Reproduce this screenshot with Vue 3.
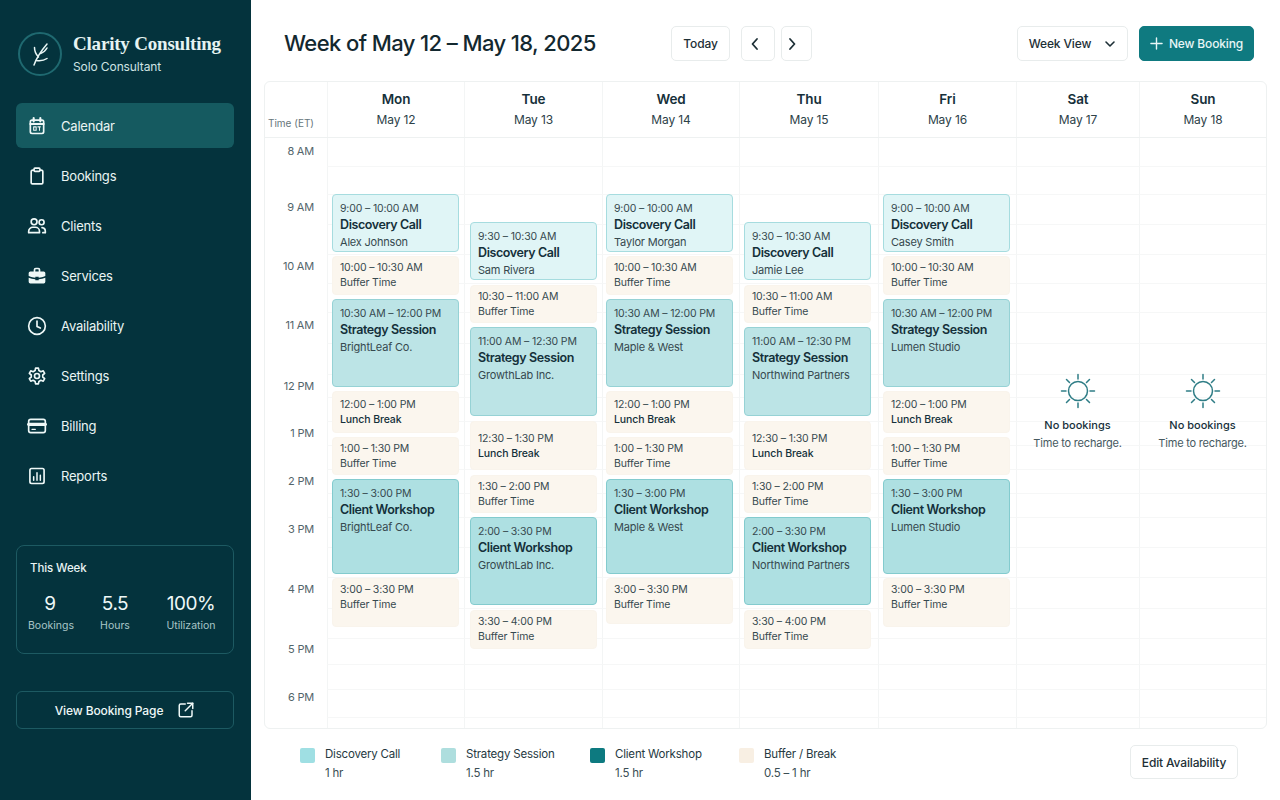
<template>
  <div class="app">
    <aside class="sidebar">
      <div class="brand">
        <div class="logo">
          <svg width="26" height="26" viewBox="0 0 26 26" fill="none" stroke="#e9f6f5" stroke-width="1.5" stroke-linecap="round" stroke-linejoin="round">
            <path d="M7 24C9.5 17 14 10 20 3" />
            <path d="M11.5 16C9 13.5 7.5 10.5 7.5 6.5" />
            <path d="M13.5 12.5C16 11.5 18.5 10 20 7" />
            <path d="M9.5 19.5C13 20 17 19.5 20 17.5" />
          </svg>
        </div>
        <div>
          <div class="brand-name">Clarity Consulting</div>
          <div class="brand-sub">Solo Consultant</div>
        </div>
      </div>

      <nav class="nav">
        <a v-for="item in navItems" :key="item.label" class="nav-item" :class="{ active: item.active }">
          <svg class="nav-icon" width="20" height="20" viewBox="0 0 24 24" fill="none" stroke="#eef8f7" stroke-width="2" stroke-linecap="round" stroke-linejoin="round" v-html="item.icon"></svg>
          <span>{{ item.label }}</span>
        </a>
      </nav>

      <div class="stats">
        <div class="stats-title">This Week</div>
        <div class="stats-row">
          <div v-for="s in stats" :key="s.label" class="stat">
            <div class="stat-value">{{ s.value }}</div>
            <div class="stat-label">{{ s.label }}</div>
          </div>
        </div>
      </div>

      <button class="view-page">
        <span>View Booking Page</span>
        <svg width="18" height="18" viewBox="0 0 24 24" fill="none" stroke="#eef8f7" stroke-width="2" stroke-linecap="round" stroke-linejoin="round">
          <path d="M11 4H5a2 2 0 0 0-2 2v13a2 2 0 0 0 2 2h13a2 2 0 0 0 2-2v-6" />
          <path d="M14 3h7v7" />
          <path d="M21 3 11 13" />
        </svg>
      </button>
    </aside>

    <main class="main">
      <header class="topbar">
        <h1 class="title">Week of May 12 – May 18, 2025</h1>
        <button class="btn today">Today</button>
        <button class="btn arrow prev">
          <svg width="16" height="16" viewBox="0 0 16 16" fill="none" stroke="#1d2f36" stroke-width="1.8" stroke-linecap="round" stroke-linejoin="round"><path d="M10 3 5.5 8l4.5 5" /></svg>
        </button>
        <button class="btn arrow next">
          <svg width="16" height="16" viewBox="0 0 16 16" fill="none" stroke="#1d2f36" stroke-width="1.8" stroke-linecap="round" stroke-linejoin="round"><path d="M6 3l4.5 5L6 13" /></svg>
        </button>
        <button class="btn week-view">
          <span>Week View</span>
          <svg width="12" height="12" viewBox="0 0 12 12" fill="none" stroke="#1d2f36" stroke-width="1.6" stroke-linecap="round" stroke-linejoin="round"><path d="M2 4l4 4 4-4" /></svg>
        </button>
        <button class="btn new-booking">
          <svg width="13" height="13" viewBox="0 0 14 14" fill="none" stroke="#e8f6f6" stroke-width="1.5" stroke-linecap="round"><path d="M7 1v12M1 7h12" /></svg>
          <span>New Booking</span>
        </button>
      </header>

      <section class="calendar">
        <div class="cal-head" :style="{ gridTemplateColumns: columnTemplate }">
          <div class="time-head">Time (ET)</div>
          <div v-for="d in days" :key="d.name" class="day-head">
            <div class="day-name">{{ d.name }}</div>
            <div class="day-date">{{ d.date }}</div>
          </div>
        </div>

        <div class="cal-body" :style="{ gridTemplateColumns: columnTemplate, gridTemplateRows: rowTemplate }">
          <template v-for="(row, r) in rows" :key="r">
            <div class="time-cell" :style="{ gridRow: r + 1, gridColumn: 1, paddingTop: row.pad + 'px' }">{{ row.label }}</div>
            <div
              v-for="(d, c) in days"
              :key="d.name"
              class="cell"
              :style="{ gridRow: r + 1, gridColumn: c + 2 }"
            ></div>
          </template>

          <div
            v-for="(d, c) in days"
            :key="d.name + '-col'"
            class="day-col"
            :style="{ gridColumn: c + 2, paddingTop: d.start + 'px', paddingLeft: d.pad + 'px' }"
          >
            <template v-if="d.events">
              <div
                v-for="(e, i) in d.events"
                :key="i"
                class="event"
                :class="e.type"
                :style="{ height: e.h + 'px', marginBottom: e.gap + 'px' }"
              >
                <div class="ev-time">{{ e.time }}</div>
                <div class="ev-title">{{ e.title }}</div>
                <div v-if="e.sub" class="ev-sub">{{ e.sub }}</div>
              </div>
            </template>
            <div v-else class="empty">
              <svg width="38" height="38" viewBox="0 0 38 38" fill="none" stroke="#2f7d86" stroke-width="1.5" stroke-linecap="round">
                <circle cx="19" cy="19" r="9.5" />
                <path d="M19 2.5V7M19 31v4.5M2.5 19H7M31 19h4.5M7.5 7.5l3 3M27.5 27.5l3 3M30.5 7.5l-3 3M10.5 27.5l-3 3" />
              </svg>
              <div class="empty-title">No bookings</div>
              <div class="empty-sub">Time to recharge.</div>
            </div>
          </div>
        </div>
      </section>

      <footer class="legend">
        <div v-for="l in legend" :key="l.label" class="legend-item" :style="{ width: l.w + 'px' }">
          <span class="swatch" :class="l.type"></span>
          <div>
            <div class="legend-label">{{ l.label }}</div>
            <div class="legend-sub">{{ l.sub }}</div>
          </div>
        </div>
        <button class="btn edit">Edit Availability</button>
      </footer>
    </main>
  </div>
</template>

<script setup>
const navItems = [
  {
    label: "Calendar",
    active: true,
    icon: '<rect x="4" y="5" width="16" height="16" rx="2"/><path d="M8 2.5v4M16 2.5v4M4 9.5h16" stroke-width="2.5"/><path d="M8 13h3v4H8zM15 13v4M13 13h3" stroke-width="1.3"/>',
  },
  {
    label: "Bookings",
    icon: '<path d="M8 5H7a2 2 0 0 0-2 2v13a1.5 1.5 0 0 0 1.5 1.5h11A1.5 1.5 0 0 0 19 20V7a2 2 0 0 0-2-2h-1"/><rect x="8.5" y="2.5" width="7" height="4" rx="1"/>',
  },
  {
    label: "Clients",
    icon: '<circle cx="8.5" cy="7" r="3.5"/><circle cx="17.5" cy="7.5" r="3"/><path d="M2 20v-1.5a5 5 0 0 1 5-5h3a5 5 0 0 1 5 5V20z"/><path d="M18 14a4.5 4.5 0 0 1 4 4.5V20h-3"/>',
  },
  {
    label: "Services",
    icon: '<path d="M9 7V4.5A1.5 1.5 0 0 1 10.5 3h3A1.5 1.5 0 0 1 15 4.5V7" /><path fill="#eef8f7" stroke="none" d="M4 6.5h16a2 2 0 0 1 2 2V12c-3 1.5-6 2-8 2v-1h-4v1c-2 0-5-.5-8-2V8.5a2 2 0 0 1 2-2zM2 14c2.5 1 5 1.5 8 1.8V17h4v-1.2c3-.3 5.5-.8 8-1.8v5a2 2 0 0 1-2 2H4a2 2 0 0 1-2-2z"/>',
  },
  {
    label: "Availability",
    icon: '<circle cx="12" cy="12" r="10"/><path d="M12 6v6.5l4 2"/>',
  },
  {
    label: "Settings",
    icon: '<circle cx="12" cy="12" r="3"/><path d="M10.3 2.5h3.4l.6 3 2.3 1.3 2.9-1 1.7 3-2.3 2v2.4l2.3 2-1.7 3-2.9-1-2.3 1.3-.6 3h-3.4l-.6-3-2.3-1.3-2.9 1-1.7-3 2.3-2v-2.4l-2.3-2 1.7-3 2.9 1 2.3-1.3z"/>',
  },
  {
    label: "Billing",
    icon: '<rect x="2" y="4" width="20" height="16" rx="2.5"/><path d="M2 10h20" stroke-width="4"/><path d="M6 16h4" stroke-width="1.6"/>',
  },
  {
    label: "Reports",
    icon: '<rect x="3.5" y="3" width="17" height="18" rx="2"/><path d="M8 17v-4M12 17V8M16 17v-6" stroke-width="1.8"/>',
  },
];

const stats = [
  { value: "9", label: "Bookings" },
  { value: "5.5", label: "Hours" },
  { value: "100%", label: "Utilization" },
];

// [label, slot height, label padding] per half hour, the rows are not even in the design
const slots = [
  ["8 AM", 29, 6], ["", 28], ["9 AM", 30, 5], ["", 30], ["10 AM", 29, 4], ["", 29],
  ["11 AM", 31, 5], ["", 31], ["12 PM", 23, 4], ["", 24], ["1 PM", 24, 4], ["", 24],
  ["2 PM", 24, 4], ["", 24], ["3 PM", 30, 4], ["", 30], ["4 PM", 31, 4], ["", 30],
  ["5 PM", 26, 3], ["", 25], ["6 PM", 28, 0], ["", 11],
];
const rows = slots.map(([label, h, pad]) => ({ label, h, pad: pad || 0 }));
const rowTemplate = rows.map((r) => r.h + "px").join(" ");
const columnTemplate = "62px 137px 138px 137px 139px 138px 123px 1fr";

const ev = (type, h, gap, time, title, sub) => ({ type, h, gap, time, title, sub });

const monLike = (client, company, lastH) => [
  ev("discovery", 58, 4, "9:00 – 10:00 AM", "Discovery Call", client),
  ev("buffer", 39, 4, "10:00 – 10:30 AM", "Buffer Time"),
  ev("strategy", 88, 4, "10:30 AM – 12:00 PM", "Strategy Session", company),
  ev("buffer lunch", 42, 4, "12:00 – 1:00 PM", "Lunch Break"),
  ev("buffer", 38, 4, "1:00 – 1:30 PM", "Buffer Time"),
  ev("workshop", 95, 4, "1:30 – 3:00 PM", "Client Workshop", company),
  ev("buffer", lastH, 0, "3:00 – 3:30 PM", "Buffer Time"),
];

const tueLike = (client, company) => [
  ev("discovery", 58, 5, "9:30 – 10:30 AM", "Discovery Call", client),
  ev("buffer", 38, 4, "10:30 – 11:00 AM", "Buffer Time"),
  ev("strategy", 89, 5, "11:00 AM – 12:30 PM", "Strategy Session", company),
  ev("buffer lunch", 49, 5, "12:30 – 1:30 PM", "Lunch Break"),
  ev("buffer", 38, 4, "1:30 – 2:00 PM", "Buffer Time"),
  ev("workshop", 88, 5, "2:00 – 3:30 PM", "Client Workshop", company),
  ev("buffer", 39, 0, "3:30 – 4:00 PM", "Buffer Time"),
];

const days = [
  { name: "Mon", date: "May 12", start: 56, pad: 5, events: monLike("Alex Johnson", "BrightLeaf Co.", 49) },
  { name: "Tue", date: "May 13", start: 84, pad: 6, events: tueLike("Sam Rivera", "GrowthLab Inc.") },
  { name: "Wed", date: "May 14", start: 56, pad: 4, events: monLike("Taylor Morgan", "Maple & West", 46) },
  { name: "Thu", date: "May 15", start: 84, pad: 5, events: tueLike("Jamie Lee", "Northwind Partners") },
  { name: "Fri", date: "May 16", start: 56, pad: 5, events: monLike("Casey Smith", "Lumen Studio", 49) },
  { name: "Sat", date: "May 17", start: 234, pad: 0 },
  { name: "Sun", date: "May 18", start: 234, pad: 0 },
];

const legend = [
  { label: "Discovery Call", sub: "1 hr", type: "discovery", w: 141 },
  { label: "Strategy Session", sub: "1.5 hr", type: "strategy", w: 149 },
  { label: "Client Workshop", sub: "1.5 hr", type: "workshop", w: 149 },
  { label: "Buffer / Break", sub: "0.5 – 1 hr", type: "buffer", w: 120 },
];
</script>

<style scoped>
/* --- Layout --- */
.app {
  display: flex;
  width: 1280px;
  height: 800px;
  overflow: hidden;
  background: #fff;
  color: #16303a;
  font-family: Inter, "Liberation Sans", sans-serif;
}

.sidebar {
  width: 251px;
  flex: none;
  box-sizing: border-box;
  padding: 31px 17px 0 16px;
  background: #04333d;
  display: flex;
  flex-direction: column;
}

.main {
  flex: 1;
  min-width: 0;
  padding: 0 13px;
  display: flex;
  flex-direction: column;
}

/* --- Sidebar --- */
.brand {
  display: flex;
  align-items: center;
  gap: 11px;
  padding-left: 2px;
}

.logo {
  width: 40px;
  height: 40px;
  border: 2px solid #1f6970;
  border-radius: 50%;
  display: flex;
  align-items: center;
  justify-content: center;
}

.brand-name {
  font-family: "Liberation Serif", serif;
  font-weight: 700;
  font-size: 19px;
  letter-spacing: -0.2px;
  line-height: 26px;
  color: #e6f3f2;
}

.brand-sub {
  font-size: 12px;
  letter-spacing: -0.1px;
  line-height: 18px;
  margin-top: 1px;
  color: #cfe3e3;
}

.nav {
  margin-top: 27px;
  display: flex;
  flex-direction: column;
  gap: 5px;
}

.nav-item {
  height: 45px;
  padding-left: 11px;
  display: flex;
  align-items: center;
  gap: 14px;
  border-radius: 6px;
  font-size: 13px;
  letter-spacing: -0.2px;
  color: #eaf5f4;
}

.nav-item.active {
  background: #155a60;
}

.stats {
  margin-top: 47px;
  height: 109px;
  box-sizing: border-box;
  padding: 14px 11px 0;
  border: 1px solid #1d5a62;
  border-radius: 8px;
}

.stats-title {
  margin-left: 2px;
  font-size: 11.5px;
  letter-spacing: -0.1px;
  line-height: 16px;
  font-weight: 500;
  color: #eaf5f4;
}

.stats-row {
  margin-top: 16px;
  display: grid;
  grid-template-columns: 44px 86px 66px;
}

.stat {
  text-align: center;
  white-space: nowrap;
}

.stat-value {
  font-size: 19px;
  letter-spacing: -0.5px;
  line-height: 24px;
  color: #eef8f7;
}

.stat-label {
  margin-top: 3px;
  font-size: 10.5px;
  line-height: 14px;
  color: #a9c6c8;
}

.view-page {
  margin-top: 37px;
  height: 38px;
  display: flex;
  align-items: center;
  justify-content: center;
  gap: 14px;
  background: none;
  border: 1px solid #1d5a62;
  border-radius: 6px;
  color: #eef8f7;
  font: 500 12px Inter, sans-serif;
  letter-spacing: -0.1px;
}

/* --- Top bar --- */
.topbar {
  height: 81px;
  flex: none;
  box-sizing: border-box;
  padding: 26px 13px 0 20px;
  display: flex;
  align-items: flex-start;
}

.title {
  margin: 0 76px 0 0;
  width: 311px;
  height: 35px;
  line-height: 35px;
  font-size: 22px;
  font-weight: 500;
  letter-spacing: -0.6px;
  white-space: nowrap;
  color: #13282f;
}

.btn {
  height: 35px;
  box-sizing: border-box;
  display: flex;
  align-items: center;
  justify-content: center;
  background: #fff;
  border: 1px solid #e8ecec;
  border-radius: 5px;
  color: #1d2f36;
  font: 500 12px Inter, sans-serif;
  letter-spacing: -0.15px;
}

.today {
  width: 59px;
}

.arrow {
  width: 34px;
  margin-left: 11px;
}

.prev {
  padding: 0 6px 0 0;
}

.next {
  width: 31px;
  margin-left: 6px;
  padding: 0 9px 0 0;
}

.week-view {
  width: 111px;
  margin-left: auto;
  gap: 13px;
}

.new-booking {
  width: 115px;
  margin-left: 11px;
  gap: 6px;
  background: #0f7a80;
  border-color: #0f7a80;
  color: #e8f6f6;
}

/* --- Calendar --- */
.calendar {
  height: 648px;
  flex: none;
  box-sizing: border-box;
  border: 1px solid #eef1f1;
  border-radius: 6px;
  overflow: hidden;
}

.cal-head {
  display: grid;
  height: 55px;
  border-bottom: 1px solid #eef1f1;
}

.time-head {
  padding-right: 13px;
  padding-top: 35px;
  text-align: right;
  font-size: 10px;
  line-height: 13px;
  color: #66767b;
}

.day-head {
  border-left: 1px solid #f3f5f5;
  text-align: center;
  padding-top: 8px;
}

.day-name {
  font-size: 13.5px;
  letter-spacing: -0.1px;
  line-height: 18px;
  font-weight: 600;
  color: #16303a;
}

.day-date {
  margin-top: 4px;
  font-size: 12px;
  letter-spacing: -0.1px;
  line-height: 16px;
  color: #2d4249;
}

.cal-body {
  display: grid;
}

.time-cell {
  padding-right: 13px;
  text-align: right;
  font-size: 11px;
  letter-spacing: -0.2px;
  line-height: 14px;
  color: #53656b;
  white-space: nowrap;
}

.cell {
  box-sizing: border-box;
  border-left: 1px solid #f3f5f5;
  border-bottom: 1px solid #f6f7f7;
}

.day-col {
  grid-row: 1 / -1;
  box-sizing: border-box;
  display: flex;
  flex-direction: column;
  z-index: 1;
}

/* --- Events --- */
.event {
  flex: none;
  width: 127px;
  box-sizing: border-box;
  padding: 6px 7px 0;
  border: 1px solid transparent;
  border-radius: 4px;
  overflow: hidden;
}

.event.discovery {
  background: #e0f5f6;
  border-color: #a6dcdf;
}

.event.strategy {
  background: #bce4e6;
  border-color: #96d2d5;
}

.event.workshop {
  background: #aee0e2;
  border-color: #83cbce;
}

.event.buffer {
  background: #fbf6ee;
  border-color: #f9f4ec;
  padding-top: 3px;
}

.event.lunch {
  display: flex;
  flex-direction: column;
  justify-content: center;
  padding-top: 0;
}

.ev-time {
  font-size: 10.5px;
  letter-spacing: -0.15px;
  line-height: 15px;
  color: #36494f;
  white-space: nowrap;
}

.ev-title {
  font-size: 12.5px;
  letter-spacing: -0.4px;
  line-height: 17px;
  font-weight: 600;
  color: #14303a;
}

.ev-sub {
  margin-top: 1px;
  font-size: 11px;
  letter-spacing: -0.2px;
  line-height: 16px;
  color: #36494f;
  white-space: nowrap;
}

.buffer .ev-title {
  font-size: 10.5px;
  letter-spacing: -0.15px;
  line-height: 15px;
  font-weight: 400;
  color: #36494f;
}

.lunch .ev-title {
  font-weight: 500;
  letter-spacing: -0.1px;
  color: #14303a;
}

.empty {
  display: flex;
  flex-direction: column;
  align-items: center;
}

.empty-title {
  margin-top: 7px;
  font-size: 11px;
  line-height: 16px;
  font-weight: 500;
  color: #16303a;
}

.empty-sub {
  margin-top: 2px;
  font-size: 11px;
  letter-spacing: -0.2px;
  line-height: 16px;
  color: #46595f;
}

/* --- Legend --- */
.legend {
  flex: 1;
  padding: 16px 29px 0 36px;
  display: flex;
  align-items: flex-start;
}

.legend-item {
  flex: none;
  display: flex;
  gap: 10px;
}

.swatch {
  width: 15px;
  height: 15px;
  margin-top: 3px;
  border-radius: 2px;
}

.swatch.discovery { background: #9fdfe3; }
.swatch.strategy { background: #aedede; }
.swatch.workshop { background: #0d7a80; }
.swatch.buffer { background: #f8efe3; }

.legend-label {
  font-size: 11.5px;
  letter-spacing: -0.2px;
  line-height: 18px;
  color: #26393f;
}

.legend-sub {
  margin-top: 1px;
  font-size: 11.5px;
  letter-spacing: -0.2px;
  line-height: 18px;
  color: #3a4d53;
}

.edit {
  width: 108px;
  height: 34px;
  margin-left: auto;
}
</style>
